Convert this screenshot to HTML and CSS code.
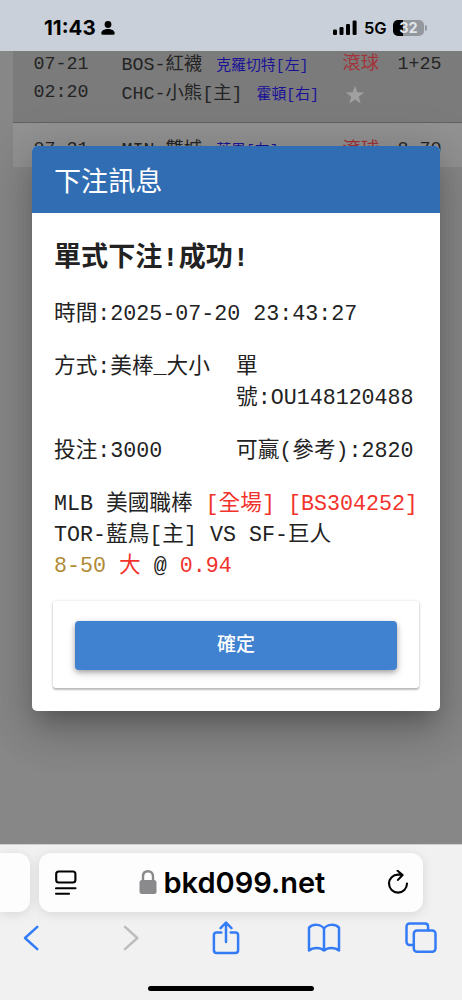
FILE: index.html
```html
<!DOCTYPE html>
<html lang="zh-Hant">
<head>
<meta charset="utf-8">
<meta name="viewport" content="width=device-width, initial-scale=1">
<title>下注訊息</title>
<link rel="stylesheet" href="styles.css">
</head>
<body>
<header class="status">
  <div class="status-left">
    <span class="clock">11:43</span>
    <svg class="person" width="14" height="14" viewBox="0 0 14 14"><circle cx="7" cy="3.500" r="3.400"/><path d="M.3 12.200C.3 9.600 3.300 8 7 8s6.700 1.600 6.700 4.200c0 .9-.6 1.500-1.500 1.500H1.800c-.9 0-1.500-.6-1.500-1.500z"/></svg>
  </div>
  <div class="status-right">
    <svg width="24" height="16" viewBox="0 0 24 16"><rect x="0" y="9.500" width="4" height="5.500" rx="1.200"/><rect x="6.500" y="7" width="4" height="8" rx="1.200"/><rect x="13" y="4" width="4" height="11" rx="1.200"/><rect x="19.600" y="0.500" width="4" height="14.500" rx="1.200"/></svg>
    <span class="net">5G</span>
    <span class="battery">32</span><i class="cap"></i>
  </div>
</header>

<main class="page">
  <section class="games">
    <div class="game first">
      <div class="when"><div>07-21</div><div>02:20</div></div>
      <div class="teams"><div>BOS-紅襪 <span class="pitcher">克羅切特[左]</span></div><div>CHC-小熊[主] <span class="pitcher">霍頓[右]</span></div></div>
      <div class="live"><div>滾球</div>
        <svg width="20" height="20" viewBox="0 0 20 20"><path d="M10 .8l2.300 6.500 6.900.2-5.500 4.200 2 6.700L10 14.500l-5.700 3.900 2-6.700L.8 7.500l6.900-.2z"/></svg>
      </div>
      <div class="line">1+25</div>
    </div>
    <div class="game second">
      <div class="when"><div>07-21</div></div>
      <div class="teams"><div>MIN-雙城 <span class="pitcher">萊恩[左]</span></div></div>
      <div class="live"><div>滾球</div></div>
      <div class="line">8-70</div>
    </div>
  </section>

  <div class="dialog">
    <div class="dialog-title">下注訊息</div>
    <div class="dialog-body">
      <h2>單式下注!成功!</h2>
      <p>時間:2025-07-20 23:43:27</p>
      <div class="pair"><div>方式:美棒_大小</div><div>單<br>號:OU148120488</div></div>
      <div class="pair"><div>投注:3000</div><div>可贏(參考):2820</div></div>
      <p class="bet">MLB 美國職棒 <span class="red">[全場] [BS304252]</span><br>TOR-藍鳥[主] VS SF-巨人<br><span class="gold">8-50</span> <span class="red">大</span> @ <span class="red">0.94</span></p>
      <div class="actions"><button class="ok">確定</button></div>
    </div>
  </div>
</main>

<footer class="browser">
  <div class="tabs">
    <div class="prev-tab"></div>
    <div class="address">
      <svg class="reader" width="22" height="26" viewBox="0 0 22 26"><rect x="1.200" y="1.500" width="19.200" height="11" rx="2.500"/><path d="M1 18.300h19.500M1 23.700h13"/></svg>
      <div class="host">
        <svg width="18" height="25" viewBox="0 0 18 25"><rect x=".5" y="10" width="17" height="14" rx="2.500"/><path d="M4 11V6.500C4 3.200 6 1.300 9 1.300s5 1.900 5 5.200V11"/></svg>
        <span>bkd099.net</span>
      </div>
      <svg class="reload" width="22" height="26" viewBox="0 0 22 26"><path d="M11 4.600h4.300M11 4.600A9 9 0 1 0 20 13.600M10.600 .8l5 4.200-4.600 4.900"/></svg>
    </div>
  </div>
  <nav class="tools">
    <span><svg width="18" height="28" viewBox="0 0 18 28"><path d="M15.300 2.800L3 14l12.300 11.200"/></svg></span>
    <span class="off"><svg width="18" height="28" viewBox="0 0 18 28"><path d="M3 2.800L15.300 14 3 25.200"/></svg></span>
    <span><svg width="28" height="34" viewBox="0 0 28 34"><path d="M9.300 11.500H4.600c-1.700 0-2.700 1-2.700 2.700v15c0 1.700 1 2.700 2.700 2.700h18.800c1.700 0 2.700-1 2.700-2.700v-15c0-1.700-1-2.700-2.700-2.700h-4.700M14 21V1.800M8.600 7.200L14 1.500l5.400 5.700"/></svg></span>
    <span><svg width="34" height="30" viewBox="0 0 34 30"><path d="M17 5.500C13.500.8 6 .8 2 4.700V27.500c4-3.400 11.500-3.400 15 0 3.500-3.400 11-3.400 15 0V4.700C28 .8 20.500.8 17 5.500zM17 5.500v22"/></svg></span>
    <span><svg width="34" height="34" viewBox="0 0 34 34"><rect x="9.800" y="9.500" width="21.700" height="21.200" rx="3.200"/><path d="M9.500 24H5.700c-2 0-3.200-1.200-3.200-3.200V5.700c0-2 1.200-3.200 3.200-3.200h15.200c2 0 3.200 1.200 3.200 3.200v3.500"/></svg></span>
  </nav>
  <div class="home-bar"></div>
</footer>
</body>
</html>
```

FILE: styles.css
```css
* { box-sizing: border-box; }
body {
  margin: 0;
  height: 1000px;
  overflow: hidden;
  display: flex;
  flex-direction: column;
  background: #878787;
  font-family: "Liberation Mono", "Noto Sans CJK TC", monospace;
}
svg { display: block; flex: none; }

.status {
  height: 51px;
  flex: none;
  display: flex;
  justify-content: space-between;
  align-items: flex-start;
  padding: 16px 35px 0 44px;
  background: #c9d0d9;
  color: #000;
  font-family: Inter, sans-serif;
}
.status-left, .status-right { display: flex; align-items: center; height: 24px; }
.clock { font-size: 20.5px; font-weight: 700; line-height: 24px; width: 53px; }
.person { margin-left: 4px; }
.net { width: 22px; margin: 0 7px 0 7px; font-size: 16.5px; font-weight: 600; line-height: 24px; letter-spacing: -.2px; white-space: nowrap; }
.battery {
  width: 31px;
  height: 16px;
  border-radius: 5px;
  background: linear-gradient(90deg, #000 10px, #93979e 10px);
  color: #e1e5ea;
  font-size: 14.5px;
  font-weight: 700;
  line-height: 16px;
  text-align: center;
}
.cap { width: 2px; height: 6px; margin-left: 1px; border-radius: 0 2px 2px 0; background: #93979e; }

.page { height: 793px; flex: none; position: relative; overflow: hidden; }
.games { margin-left: 13px; color: #242424; font-size: 18.33px; white-space: nowrap; }
.game { display: grid; grid-template-columns: 88px 221px 55px 1fr; padding-left: 20.500px; }
.first { height: 72px; background: #7b7b7b; border-bottom: 1px solid #626262; }
.second { height: 44px; background: #929292; padding-top: 13px; }
.when, .line { line-height: 27.500px; }
.teams, .live { line-height: 28.500px; }
.first .teams { padding-top: 1px; }
.second .teams, .second .live { padding-top: 1px; }
.pitcher { margin-left: 3px; font-size: 14.9px; color: #1a1297; }
.live { color: #a4343a; }
.first .live { display: flex; flex-direction: column; gap: 7px; line-height: 27px; }
.live svg { margin-left: 2px; fill: #a0a0a0; }

.dialog {
  position: absolute;
  left: 32px;
  top: 95px;
  width: 408px;
  height: 565px;
  border-radius: 5px;
  overflow: hidden;
  background: #fff;
  color: #222;
  box-shadow: 0 15px 20px -8px rgba(0,0,0,.22), 0 20px 44px 4px rgba(0,0,0,.14), 0 8px 50px 8px rgba(0,0,0,.1);
}
.dialog-title { height: 67px; padding-left: 22px; background: #306db2; color: #fff; font-size: 27.1px; line-height: 75px; }
.dialog-body { padding: 30px 21px 0; font-size: 21.67px; line-height: 31.300px; white-space: nowrap; }
.dialog-body h2 { margin: 0 0 24px 1px; font-size: 27.1px; font-weight: 600; line-height: 32px; }
.dialog-body p { margin: 0 0 21.500px 1px; }
.pair { display: grid; grid-template-columns: 182px 1fr; margin: 0 0 21.500px 1px; white-space: nowrap; }
.dialog-body .bet { margin-bottom: 18px; }
.red { color: #f2322b; }
.gold { color: #b18a35; }
.actions { height: 87px; padding: 20px 22px 0; border-radius: 3px; box-shadow: 0 2px 2px rgba(0,0,0,.24), 0 0 3px rgba(0,0,0,.15); }
.ok {
  display: block;
  width: 100%;
  height: 49px;
  padding: 0 0 5px;
  border: 0;
  border-radius: 4px;
  background: #4082cf;
  color: #fff;
  font: 500 19px/44px "Noto Sans CJK TC", sans-serif;
  box-shadow: 0 2px 5px rgba(0,0,0,.28), 0 4px 10px rgba(0,0,0,.14);
}

.browser { height: 156px; flex: none; background: #f1f1f1; border-top: 1px solid #cfcfcf; overflow: hidden; }
.tabs { display: flex; gap: 9px; padding-top: 8px; height: 68px; }
.prev-tab, .address { height: 59px; background: #fdfdfd; box-shadow: 0 2px 12px rgba(0,0,0,.11); }
.prev-tab { width: 30px; border-radius: 0 12px 12px 0; }
.address { width: 384px; border-radius: 12px; padding: 0 14px 0 16px; display: flex; align-items: center; justify-content: space-between; }
.reader, .reload { fill: none; stroke: #000; stroke-width: 2.1; stroke-linecap: round; stroke-linejoin: round; }
.host { display: flex; align-items: center; gap: 7px; color: #000; font: 600 29px/36px Inter, sans-serif; }
.host span { width: 162px; white-space: nowrap; }
.host svg rect { fill: #8a8a8d; }
.host svg path { fill: none; stroke: #8a8a8d; stroke-width: 2.4; }
.tools {
  height: 50px;
  display: flex;
  align-items: center;
  justify-content: space-between;
  padding: 0 24px 0 14px;
}
.tools span { width: 34px; display: flex; justify-content: center; }
.tools svg { fill: none; stroke: #347cf6; stroke-width: 2.5; stroke-linecap: round; stroke-linejoin: round; }
.tools .off { padding-left: 5px; }
.tools .off svg { stroke: #bdbdbf; }
.home-bar { width: 166px; height: 5px; margin: 23px auto 0; border-radius: 3px; background: #000; }
```
